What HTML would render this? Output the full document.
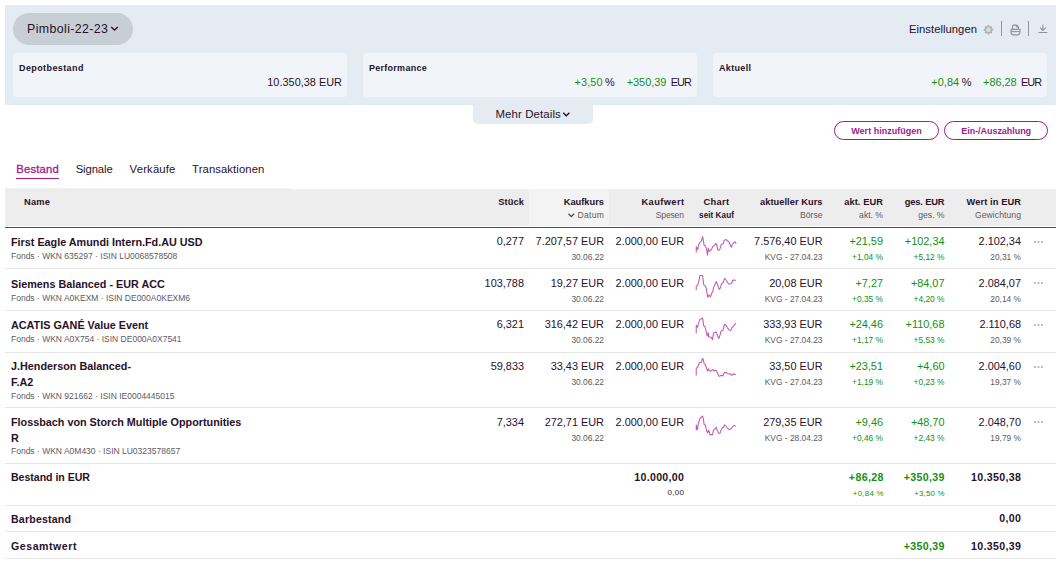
<!DOCTYPE html>
<html><head><meta charset="utf-8">
<style>
html,body{margin:0;padding:0;background:#fff;}
body{width:1060px;height:586px;position:relative;overflow:hidden;font-family:"Liberation Sans",sans-serif;color:#29112a;}
.t{position:absolute;white-space:pre;line-height:1;}
.a{position:absolute;}
.panel{left:5px;top:5px;width:1051px;height:100px;background:#e4ebf2;}
.pill{left:13px;top:13px;width:120px;height:32px;border-radius:16px;background:#c8ced6;}
.card{top:53px;width:334px;height:44px;border-radius:4px;background:#f1f5f9;}
.more{left:473px;top:105px;width:120px;height:18px;background:#e4ebf2;border-radius:0 0 5px 5px;box-shadow:0 1px 1px rgba(0,0,0,0.08);}
.btn{top:121px;height:17px;border:1.3px solid #a1198f;border-radius:10px;}
.uline{left:16px;top:177.5px;width:43px;height:1.6px;background:#a1198f;}
.thead{left:5px;top:189px;width:1051px;height:37px;background:#ededed;}
.thead2{left:291px;top:189px;width:765px;height:1px;background:#f1f1f1;}
.tline{left:5px;top:188px;width:286px;height:1px;background:#f1f1f1;}
.tline2{left:291px;top:189px;width:765px;height:1px;background:#f1f1f1;}
.sortcol{left:529px;top:189px;width:80px;height:37px;background:#f3f3f3;}
.pline{left:5px;top:227px;width:1051px;height:1px;background:#a1198f;}
.rl{left:5px;width:1051px;height:1px;background:#e6e6e6;}
.sep{width:1px;background:#8f949a;top:21px;height:15px;}
.dots{left:1034px;width:10px;height:3px;}
</style></head><body>
<div class="a panel"></div>
<div class="a pill"></div>
<div class="a card" style="left:13px"></div>
<div class="a card" style="left:363px"></div>
<div class="a card" style="left:713px"></div>
<div class="a more"></div>
<div class="a btn" style="left:834px;width:103px"></div>
<div class="a btn" style="left:944px;width:102px"></div>
<div class="a uline"></div>
<div class="a tline"></div>
<div class="a thead"></div>
<div class="a thead2"></div>
<div class="a sortcol"></div>
<div class="a pline"></div>
<div class="a rl" style="top:268px"></div>
<div class="a rl" style="top:310px"></div>
<div class="a rl" style="top:352px"></div>
<div class="a rl" style="top:407px"></div>
<div class="a rl" style="top:463px"></div>
<div class="a rl" style="top:505px"></div>
<div class="a rl" style="top:531px"></div>
<div class="a rl" style="top:558px"></div>
<div class="a sep" style="left:1001px"></div>
<div class="a sep" style="left:1028px"></div>
<!-- chevrons -->
<svg class="a" style="left:110px;top:25px" width="9" height="7" viewBox="0 0 9 7"><path d="M1.2 2 L4.5 5 L7.8 2" fill="none" stroke="#29112a" stroke-width="1.4"/></svg>
<svg class="a" style="left:562px;top:111px" width="9" height="7" viewBox="0 0 9 7"><path d="M1.2 1.8 L4.3 4.8 L7.4 1.8" fill="none" stroke="#29112a" stroke-width="1.4"/></svg>
<svg class="a" style="left:567px;top:212px" width="9" height="7" viewBox="0 0 9 7"><path d="M1.5 1.8 L4.3 4.6 L7.1 1.8" fill="none" stroke="#444" stroke-width="1.3"/></svg>
<!-- gear -->
<svg class="a" style="left:982.5px;top:24.7px" width="11" height="10" viewBox="0 0 11 10"><g transform="translate(5.4 4.8)" fill="#aeb2b8"><circle r="3.6"/><rect x="-0.95" y="-4.7" width="1.9" height="9.4" rx="0.5"/><rect x="-0.95" y="-4.7" width="1.9" height="9.4" rx="0.5" transform="rotate(45)"/><rect x="-0.95" y="-4.7" width="1.9" height="9.4" rx="0.5" transform="rotate(90)"/><rect x="-0.95" y="-4.7" width="1.9" height="9.4" rx="0.5" transform="rotate(135)"/><circle r="2.2" fill="#e4ebf2"/><circle r="1.2" fill="none" stroke="#aeb2b8" stroke-width="0.6" opacity="0.7"/></g></svg>
<!-- print -->
<svg class="a" style="left:1009.5px;top:23.5px" width="11" height="12" viewBox="0 0 11 12"><path d="M2.6 5 V2.3 Q2.6 1.1 3.8 1.1 H6.6 L8.4 2.8 V5" fill="none" stroke="#8f949a" stroke-width="1.1"/><path d="M6.2 1.1 H6.8 L8.4 2.6 V3.4 H6.2 Z" fill="#8f949a"/><path d="M1 5.4 H10 V8 Q10 10.9 7.4 10.9 H3.6 Q1 10.9 1 8 Z" fill="none" stroke="#8f949a" stroke-width="1.1"/><path d="M1.2 7.6 H9.8" stroke="#8f949a" stroke-width="1.1"/></svg>
<!-- download -->
<svg class="a" style="left:1037.5px;top:24px" width="10" height="10" viewBox="0 0 10 10"><path d="M4.9 0.6 V6.4 M2 3.6 L4.9 6.4 L7.8 3.6 M0.4 8.5 H9.4" fill="none" stroke="#8f949a" stroke-width="1.1"/></svg>
<!-- dots -->
<svg class="a" style="left:1033px;top:240px" width="12" height="4"><circle cx="2" cy="2" r="1" fill="#aaa"/><circle cx="5.5" cy="2" r="1" fill="#aaa"/><circle cx="9" cy="2" r="1" fill="#aaa"/></svg>
<svg class="a" style="left:1033px;top:281px" width="12" height="4"><circle cx="2" cy="2" r="1" fill="#aaa"/><circle cx="5.5" cy="2" r="1" fill="#aaa"/><circle cx="9" cy="2" r="1" fill="#aaa"/></svg>
<svg class="a" style="left:1033px;top:323px" width="12" height="4"><circle cx="2" cy="2" r="1" fill="#aaa"/><circle cx="5.5" cy="2" r="1" fill="#aaa"/><circle cx="9" cy="2" r="1" fill="#aaa"/></svg>
<svg class="a" style="left:1033px;top:365px" width="12" height="4"><circle cx="2" cy="2" r="1" fill="#aaa"/><circle cx="5.5" cy="2" r="1" fill="#aaa"/><circle cx="9" cy="2" r="1" fill="#aaa"/></svg>
<svg class="a" style="left:1033px;top:420px" width="12" height="4"><circle cx="2" cy="2" r="1" fill="#aaa"/><circle cx="5.5" cy="2" r="1" fill="#aaa"/><circle cx="9" cy="2" r="1" fill="#aaa"/></svg>
<svg class="a" style="left:680px;top:228px" width="80" height="40" viewBox="0 0 1060 530"><polyline points="215,320 215,250 235,285 250,215 265,190 280,180 300,115 315,200 320,230 335,235 350,270 365,360 375,270 390,310 405,300 420,275 440,240 460,230 470,205 485,215 500,290 515,295 530,275 545,225 560,210 575,205 585,165 600,155 615,155 635,175 655,195 680,255 700,210 720,185 735,185 740,205" fill="none" stroke="#c257b5" stroke-width="14" stroke-linejoin="round" stroke-linecap="round"/></svg>
<svg class="a" style="left:680px;top:269px" width="80" height="40" viewBox="0 0 1060 530"><polyline points="215,275 215,230 235,210 250,160 265,85 290,85 300,90 315,210 330,220 345,245 360,330 370,375 385,345 405,370 420,320 435,300 445,245 460,215 480,165 495,200 520,270 535,250 550,195 565,185 575,175 590,125 605,140 625,170 645,200 665,200 685,185 700,150 715,145 735,150" fill="none" stroke="#c257b5" stroke-width="14" stroke-linejoin="round" stroke-linecap="round"/></svg>
<svg class="a" style="left:680px;top:311px" width="80" height="40" viewBox="0 0 1060 530"><polyline points="215,290 215,190 230,215 250,155 265,110 280,105 300,95 315,200 330,205 345,260 360,330 375,290 380,345 400,345 415,350 430,380 445,290 465,280 480,280 500,330 515,365 530,320 545,265 570,255 590,175 610,190 630,225 650,250 670,260 690,220 710,200 735,165" fill="none" stroke="#c257b5" stroke-width="14" stroke-linejoin="round" stroke-linecap="round"/></svg>
<svg class="a" style="left:680px;top:353px" width="80" height="40" viewBox="0 0 1060 530"><polyline points="215,290 215,205 235,185 250,145 265,125 285,125 295,75 305,75 320,140 335,155 350,195 365,240 375,210 390,230 405,245 420,225 435,220 450,240 465,230 480,230 500,275 520,310 545,295 565,305 590,260 610,255 630,270 650,280 665,275 685,295 705,275 720,285 735,280" fill="none" stroke="#c257b5" stroke-width="14" stroke-linejoin="round" stroke-linecap="round"/></svg>
<svg class="a" style="left:680px;top:408px" width="80" height="40" viewBox="0 0 1060 530"><polyline points="215,290 215,225 230,285 245,205 265,130 280,130 295,105 305,120 320,220 335,225 350,290 365,330 380,295 400,360 415,350 430,355 445,290 460,280 480,255 495,300 510,335 530,335 545,290 560,260 575,260 590,225 610,245 635,275 655,285 680,275 700,245 715,230 735,240" fill="none" stroke="#c257b5" stroke-width="14" stroke-linejoin="round" stroke-linecap="round"/></svg>
<div class="t" style="top:22.50px;font-size:12.4px;letter-spacing:0.379px;left:27.00px;">Pimboli-22-23</div>
<div class="t" style="top:23.53px;font-size:11.3px;letter-spacing:0.013px;left:909.00px;">Einstellungen</div>
<div class="t" style="top:64.38px;font-size:9.0px;font-weight:700;letter-spacing:0.399px;left:19.00px;">Depotbestand</div>
<div class="t" style="top:64.38px;font-size:9.0px;font-weight:700;letter-spacing:0.267px;left:369.00px;">Performance</div>
<div class="t" style="top:64.38px;font-size:9.0px;font-weight:700;letter-spacing:0.331px;left:719.00px;">Aktuell</div>
<div class="t" style="top:76.77px;font-size:10.9px;letter-spacing:0.018px;left:267.30px;">10.350,38 EUR</div>
<div class="t" style="top:76.77px;font-size:10.9px;color:#139014;letter-spacing:0.109px;left:574.50px;">+3,50</div>
<div class="t" style="top:76.77px;font-size:10.9px;letter-spacing:-0.488px;left:605.11px;">%</div>
<div class="t" style="top:76.77px;font-size:10.9px;color:#139014;letter-spacing:-0.012px;left:626.70px;">+350,39</div>
<div class="t" style="top:76.77px;font-size:10.9px;letter-spacing:-0.850px;left:670.70px;">EUR</div>
<div class="t" style="top:76.77px;font-size:10.9px;color:#139014;letter-spacing:0.109px;left:931.20px;">+0,84</div>
<div class="t" style="top:76.77px;font-size:10.9px;letter-spacing:-0.488px;left:961.81px;">%</div>
<div class="t" style="top:76.77px;font-size:10.9px;color:#139014;letter-spacing:-0.045px;left:983.10px;">+86,28</div>
<div class="t" style="top:76.77px;font-size:10.9px;letter-spacing:-0.850px;left:1020.90px;">EUR</div>
<div class="t" style="top:108.75px;font-size:11.4px;letter-spacing:0.133px;left:495.40px;">Mehr Details</div>
<div class="t" style="top:127.18px;font-size:9.0px;font-weight:700;color:#a1198f;letter-spacing:0.012px;left:851.25px;">Wert hinzufügen</div>
<div class="t" style="top:127.18px;font-size:9.0px;font-weight:700;color:#a1198f;letter-spacing:-0.050px;left:961.30px;">Ein-/Auszahlung</div>
<div class="t" style="top:163.93px;font-size:11.3px;color:#a1198f;letter-spacing:0.205px;-webkit-text-stroke:0.3px #a1198f;left:16.20px;">Bestand</div>
<div class="t" style="top:163.93px;font-size:11.3px;letter-spacing:-0.115px;left:75.70px;">Signale</div>
<div class="t" style="top:163.93px;font-size:11.3px;letter-spacing:0.172px;left:129.60px;">Verkäufe</div>
<div class="t" style="top:163.93px;font-size:11.3px;letter-spacing:0.086px;left:192.10px;">Transaktionen</div>
<div class="t" style="top:198.13px;font-size:9.3px;font-weight:700;letter-spacing:0.224px;left:24.00px;">Name</div>
<div class="t" style="top:198.13px;font-size:9.3px;font-weight:700;letter-spacing:0.118px;left:498.20px;">Stück</div>
<div class="t" style="top:198.13px;font-size:9.3px;font-weight:700;left:563.70px;">Kaufkurs</div>
<div class="t" style="top:211.32px;font-size:8.6px;color:#5e5a62;letter-spacing:0.322px;left:577.40px;">Datum</div>
<div class="t" style="top:198.13px;font-size:9.3px;font-weight:700;letter-spacing:0.388px;left:641.50px;">Kaufwert</div>
<div class="t" style="top:211.32px;font-size:8.6px;color:#5e5a62;letter-spacing:-0.191px;left:655.80px;">Spesen</div>
<div class="t" style="top:198.13px;font-size:9.3px;font-weight:700;letter-spacing:0.380px;left:703.40px;">Chart</div>
<div class="t" style="top:211.66px;font-size:8.2px;font-weight:700;letter-spacing:0.028px;left:699.10px;">seit Kauf</div>
<div class="t" style="top:198.13px;font-size:9.3px;font-weight:700;letter-spacing:0.037px;left:760.00px;">aktueller Kurs</div>
<div class="t" style="top:211.32px;font-size:8.6px;color:#5e5a62;left:800.05px;">Börse</div>
<div class="t" style="top:198.13px;font-size:9.3px;font-weight:700;letter-spacing:0.081px;left:844.20px;">akt. EUR</div>
<div class="t" style="top:211.32px;font-size:8.6px;color:#5e5a62;left:859.11px;">akt. %</div>
<div class="t" style="top:198.13px;font-size:9.3px;font-weight:700;letter-spacing:-0.161px;left:904.80px;">ges. EUR</div>
<div class="t" style="top:211.32px;font-size:8.6px;color:#5e5a62;left:918.22px;">ges. %</div>
<div class="t" style="top:198.13px;font-size:9.3px;font-weight:700;letter-spacing:0.094px;left:966.50px;">Wert in EUR</div>
<div class="t" style="top:211.32px;font-size:8.6px;color:#5e5a62;letter-spacing:0.068px;left:975.00px;">Gewichtung</div>
<div class="t" style="top:236.86px;font-size:10.8px;font-weight:700;left:11.00px;">First Eagle Amundi Intern.Fd.AU USD</div>
<div class="t" style="top:251.80px;font-size:8.5px;color:#5e5a62;left:11.00px;">Fonds · WKN 635297 · ISIN LU0068578508</div>
<div class="t" style="top:235.97px;font-size:10.9px;left:496.73px;">0,277</div>
<div class="t" style="top:235.97px;font-size:10.9px;left:535.58px;">7.207,57 EUR</div>
<div class="t" style="top:252.89px;font-size:8.4px;color:#5e5a62;left:571.39px;">30.06.22</div>
<div class="t" style="top:235.97px;font-size:10.9px;left:615.58px;">2.000,00 EUR</div>
<div class="t" style="top:235.97px;font-size:10.9px;left:754.08px;">7.576,40 EUR</div>
<div class="t" style="top:252.89px;font-size:8.4px;color:#5e5a62;left:764.77px;">KVG - 27.04.23</div>
<div class="t" style="top:235.97px;font-size:10.9px;color:#139014;left:849.38px;">+21,59</div>
<div class="t" style="top:252.89px;font-size:8.4px;color:#139014;left:852.03px;">+1,04 %</div>
<div class="t" style="top:235.97px;font-size:10.9px;color:#139014;left:904.83px;">+102,34</div>
<div class="t" style="top:252.89px;font-size:8.4px;color:#139014;left:913.53px;">+5,12 %</div>
<div class="t" style="top:235.97px;font-size:10.9px;left:978.59px;">2.102,34</div>
<div class="t" style="top:252.89px;font-size:8.4px;color:#5e5a62;left:990.27px;">20,31 %</div>
<div class="t" style="top:278.86px;font-size:10.8px;font-weight:700;left:11.00px;">Siemens Balanced - EUR ACC</div>
<div class="t" style="top:293.80px;font-size:8.5px;color:#5e5a62;left:11.00px;">Fonds · WKN A0KEXM · ISIN DE000A0KEXM6</div>
<div class="t" style="top:277.97px;font-size:10.9px;left:484.62px;">103,788</div>
<div class="t" style="top:277.97px;font-size:10.9px;left:550.72px;">19,27 EUR</div>
<div class="t" style="top:294.89px;font-size:8.4px;color:#5e5a62;left:571.39px;">30.06.22</div>
<div class="t" style="top:277.97px;font-size:10.9px;left:615.58px;">2.000,00 EUR</div>
<div class="t" style="top:277.97px;font-size:10.9px;left:769.22px;">20,08 EUR</div>
<div class="t" style="top:294.89px;font-size:8.4px;color:#5e5a62;left:764.77px;">KVG - 27.04.23</div>
<div class="t" style="top:277.97px;font-size:10.9px;color:#139014;left:855.44px;">+7,27</div>
<div class="t" style="top:294.89px;font-size:8.4px;color:#139014;left:852.03px;">+0,35 %</div>
<div class="t" style="top:277.97px;font-size:10.9px;color:#139014;left:910.88px;">+84,07</div>
<div class="t" style="top:294.89px;font-size:8.4px;color:#139014;left:913.53px;">+4,20 %</div>
<div class="t" style="top:277.97px;font-size:10.9px;left:978.59px;">2.084,07</div>
<div class="t" style="top:294.89px;font-size:8.4px;color:#5e5a62;left:990.27px;">20,14 %</div>
<div class="t" style="top:319.86px;font-size:10.8px;font-weight:700;left:11.00px;">ACATIS GANÉ Value Event</div>
<div class="t" style="top:334.80px;font-size:8.5px;color:#5e5a62;left:11.00px;">Fonds · WKN A0X754 · ISIN DE000A0X7541</div>
<div class="t" style="top:318.97px;font-size:10.9px;left:496.73px;">6,321</div>
<div class="t" style="top:318.97px;font-size:10.9px;left:544.66px;">316,42 EUR</div>
<div class="t" style="top:335.89px;font-size:8.4px;color:#5e5a62;left:571.39px;">30.06.22</div>
<div class="t" style="top:318.97px;font-size:10.9px;left:615.58px;">2.000,00 EUR</div>
<div class="t" style="top:318.97px;font-size:10.9px;left:763.16px;">333,93 EUR</div>
<div class="t" style="top:335.89px;font-size:8.4px;color:#5e5a62;left:764.77px;">KVG - 27.04.23</div>
<div class="t" style="top:318.97px;font-size:10.9px;color:#139014;left:849.38px;">+24,46</div>
<div class="t" style="top:335.89px;font-size:8.4px;color:#139014;left:852.03px;">+1,17 %</div>
<div class="t" style="top:318.97px;font-size:10.9px;color:#139014;left:905.62px;">+110,68</div>
<div class="t" style="top:335.89px;font-size:8.4px;color:#139014;left:913.53px;">+5,53 %</div>
<div class="t" style="top:318.97px;font-size:10.9px;left:979.41px;">2.110,68</div>
<div class="t" style="top:335.89px;font-size:8.4px;color:#5e5a62;left:990.27px;">20,39 %</div>
<div class="t" style="top:360.86px;font-size:10.8px;font-weight:700;left:11.00px;">J.Henderson Balanced-</div>
<div class="t" style="top:376.86px;font-size:10.8px;font-weight:700;left:11.00px;">F.A2</div>
<div class="t" style="top:391.80px;font-size:8.5px;color:#5e5a62;left:11.00px;">Fonds · WKN 921662 · ISIN IE0004445015</div>
<div class="t" style="top:360.97px;font-size:10.9px;left:490.69px;">59,833</div>
<div class="t" style="top:360.97px;font-size:10.9px;left:550.72px;">33,43 EUR</div>
<div class="t" style="top:377.89px;font-size:8.4px;color:#5e5a62;left:571.39px;">30.06.22</div>
<div class="t" style="top:360.97px;font-size:10.9px;left:615.58px;">2.000,00 EUR</div>
<div class="t" style="top:360.97px;font-size:10.9px;left:769.22px;">33,50 EUR</div>
<div class="t" style="top:377.89px;font-size:8.4px;color:#5e5a62;left:764.77px;">KVG - 27.04.23</div>
<div class="t" style="top:360.97px;font-size:10.9px;color:#139014;left:849.38px;">+23,51</div>
<div class="t" style="top:377.89px;font-size:8.4px;color:#139014;left:852.03px;">+1,19 %</div>
<div class="t" style="top:360.97px;font-size:10.9px;color:#139014;left:916.94px;">+4,60</div>
<div class="t" style="top:377.89px;font-size:8.4px;color:#139014;left:913.53px;">+0,23 %</div>
<div class="t" style="top:360.97px;font-size:10.9px;left:978.59px;">2.004,60</div>
<div class="t" style="top:377.89px;font-size:8.4px;color:#5e5a62;left:990.27px;">19,37 %</div>
<div class="t" style="top:416.86px;font-size:10.8px;font-weight:700;left:11.00px;">Flossbach von Storch Multiple Opportunities</div>
<div class="t" style="top:432.86px;font-size:10.8px;font-weight:700;left:11.00px;">R</div>
<div class="t" style="top:447.30px;font-size:8.5px;color:#5e5a62;left:11.00px;">Fonds · WKN A0M430 · ISIN LU0323578657</div>
<div class="t" style="top:416.97px;font-size:10.9px;left:496.73px;">7,334</div>
<div class="t" style="top:416.97px;font-size:10.9px;left:544.66px;">272,71 EUR</div>
<div class="t" style="top:433.89px;font-size:8.4px;color:#5e5a62;left:571.39px;">30.06.22</div>
<div class="t" style="top:416.97px;font-size:10.9px;left:615.58px;">2.000,00 EUR</div>
<div class="t" style="top:416.97px;font-size:10.9px;left:763.16px;">279,35 EUR</div>
<div class="t" style="top:433.89px;font-size:8.4px;color:#5e5a62;left:764.77px;">KVG - 28.04.23</div>
<div class="t" style="top:416.97px;font-size:10.9px;color:#139014;left:855.44px;">+9,46</div>
<div class="t" style="top:433.89px;font-size:8.4px;color:#139014;left:852.03px;">+0,46 %</div>
<div class="t" style="top:416.97px;font-size:10.9px;color:#139014;left:910.88px;">+48,70</div>
<div class="t" style="top:433.89px;font-size:8.4px;color:#139014;left:913.53px;">+2,43 %</div>
<div class="t" style="top:416.97px;font-size:10.9px;left:978.59px;">2.048,70</div>
<div class="t" style="top:433.89px;font-size:8.4px;color:#5e5a62;left:990.27px;">19,79 %</div>
<div class="t" style="top:472.32px;font-size:10.6px;font-weight:700;letter-spacing:-0.036px;left:11.00px;">Bestand in EUR</div>
<div class="t" style="top:472.02px;font-size:10.6px;font-weight:700;letter-spacing:0.332px;left:634.20px;">10.000,00</div>
<div class="t" style="top:489.23px;font-size:8.0px;letter-spacing:0.274px;left:667.60px;">0,00</div>
<div class="t" style="top:472.22px;font-size:10.6px;font-weight:700;color:#139014;letter-spacing:0.399px;left:848.80px;">+86,28</div>
<div class="t" style="top:489.51px;font-size:7.9px;color:#139014;letter-spacing:0.252px;left:852.80px;">+0,84 %</div>
<div class="t" style="top:472.22px;font-size:10.6px;font-weight:700;color:#139014;letter-spacing:0.368px;left:903.70px;">+350,39</div>
<div class="t" style="top:489.51px;font-size:7.9px;color:#139014;letter-spacing:0.185px;left:914.20px;">+3,50 %</div>
<div class="t" style="top:472.22px;font-size:10.6px;font-weight:700;letter-spacing:0.370px;left:970.90px;">10.350,38</div>
<div class="t" style="top:513.92px;font-size:10.6px;font-weight:700;letter-spacing:0.191px;left:11.00px;">Barbestand</div>
<div class="t" style="top:513.42px;font-size:10.6px;font-weight:700;letter-spacing:0.358px;left:999.30px;">0,00</div>
<div class="t" style="top:540.72px;font-size:10.6px;font-weight:700;letter-spacing:0.538px;left:11.00px;">Gesamtwert</div>
<div class="t" style="top:540.72px;font-size:10.6px;font-weight:700;color:#139014;letter-spacing:0.368px;left:903.70px;">+350,39</div>
<div class="t" style="top:540.72px;font-size:10.6px;font-weight:700;letter-spacing:0.370px;left:970.90px;">10.350,39</div>
</body></html>
